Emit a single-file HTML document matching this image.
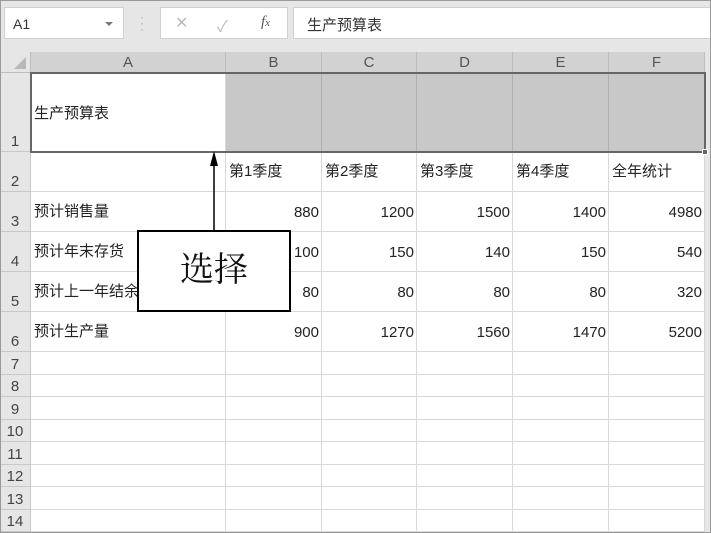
<!DOCTYPE html>
<html><head><meta charset="utf-8"><style>
*{box-sizing:border-box;margin:0;padding:0}
body{width:711px;height:533px;overflow:hidden;background:#e6e6e6;font-family:"Liberation Sans","Noto Sans CJK SC",sans-serif;position:relative}
.frame{position:absolute;left:0;top:0;width:711px;height:533px;border:1px solid #9a9a9a;pointer-events:none;z-index:9}
.nb{position:absolute;left:4px;top:7px;width:120px;height:32px;background:#fff;border:1px solid #d0d0d0;font-size:14px;color:#333;padding:8px 0 0 8px}
.nb .dd{position:absolute;right:10px;top:14px;border-left:4px solid transparent;border-right:4px solid transparent;border-top:4px solid #777}
.dots{position:absolute;left:140px;top:14px;color:#aaa;font-size:12px;line-height:6px}
.fb{position:absolute;left:160px;top:7px;width:128px;height:32px;background:#fff;border:1px solid #d0d0d0;color:#bbb;font-size:16px}
.fx{position:absolute;left:293px;top:7px;width:420px;height:32px;background:#fff;border:1px solid #d0d0d0;font-size:15px;color:#333;padding:6px 0 0 13px}
table{position:absolute;left:0;top:52px;border-collapse:separate;border-spacing:0;table-layout:fixed}
td{border-right:1px solid #d8d8d8;border-bottom:1px solid #d8d8d8;background:#fff;font-size:15px;color:#222;vertical-align:bottom;padding:0 3px 6px 3px;white-space:nowrap;overflow:hidden}
td.h{background:#e6e6e6;color:#444;font-size:15px;text-align:center;padding:0 0 1px 0;border-right:1px solid #c8c8c8;border-bottom:1px solid #c8c8c8}
tr.ch td{background:#d2d2d2;color:#555;font-size:15px;text-align:center;vertical-align:bottom;padding:0 0 1px;border-right:1px solid #bdbdbd;border-bottom:1px solid #bdbdbd}
tr.ch td.c0{background:#e6e6e6}
td.n{text-align:right;padding-right:2px}
td.g{background:#c8c8c8;border-right:1px solid #b0b0b0}
td.r{font-size:15px}
</style></head><body>
<div class="nb">A1<div class="dd"></div></div>
<div class="dots">·<br>·<br>·</div>
<div class="fb"><span style="position:absolute;left:14px;top:5px">✕</span><span style="position:absolute;left:56px;top:5px">✓</span><span style="position:absolute;left:100px;top:6px;color:#555;font-family:'Liberation Serif',serif;font-style:italic;font-size:15px">f<span style="font-size:11px">x</span></span></div>
<div class="fx">生产预算表</div>
<div style="position:absolute;left:14px;top:57px;width:0;height:0;border-left:12px solid transparent;border-bottom:12px solid #b8b8b8;z-index:3"></div>
<table>
<colgroup><col style="width:31px"><col style="width:195px"><col style="width:96px"><col style="width:95px"><col style="width:96px"><col style="width:96px"><col style="width:96px"></colgroup>
<tr class="ch" style="height:21px"><td class="c0"></td><td>A</td><td>B</td><td>C</td><td>D</td><td>E</td><td>F</td></tr>
<tr style="height:79px"><td class="h">1</td><td style="vertical-align:middle;padding-bottom:0">生产预算表</td><td class="g"></td><td class="g"></td><td class="g"></td><td class="g"></td><td class="g"></td></tr>
<tr style="height:40px"><td class="h">2</td><td></td><td style="padding-bottom:10px">第1季度</td><td style="padding-bottom:10px">第2季度</td><td style="padding-bottom:10px">第3季度</td><td style="padding-bottom:10px">第4季度</td><td style="padding-bottom:10px">全年统计</td></tr>
<tr style="height:40px"><td class="h">3</td><td style="padding-bottom:10px">预计销售量</td><td class="n" style="padding-bottom:10px">880</td><td class="n" style="padding-bottom:10px">1200</td><td class="n" style="padding-bottom:10px">1500</td><td class="n" style="padding-bottom:10px">1400</td><td class="n" style="padding-bottom:10px">4980</td></tr>
<tr style="height:40px"><td class="h">4</td><td style="padding-bottom:10px">预计年末存货</td><td class="n" style="padding-bottom:10px">100</td><td class="n" style="padding-bottom:10px">150</td><td class="n" style="padding-bottom:10px">140</td><td class="n" style="padding-bottom:10px">150</td><td class="n" style="padding-bottom:10px">540</td></tr>
<tr style="height:40px"><td class="h">5</td><td style="padding-bottom:10px">预计上一年结余</td><td class="n" style="padding-bottom:10px">80</td><td class="n" style="padding-bottom:10px">80</td><td class="n" style="padding-bottom:10px">80</td><td class="n" style="padding-bottom:10px">80</td><td class="n" style="padding-bottom:10px">320</td></tr>
<tr style="height:40px"><td class="h">6</td><td style="padding-bottom:10px">预计生产量</td><td class="n" style="padding-bottom:10px">900</td><td class="n" style="padding-bottom:10px">1270</td><td class="n" style="padding-bottom:10px">1560</td><td class="n" style="padding-bottom:10px">1470</td><td class="n" style="padding-bottom:10px">5200</td></tr>
<tr style="height:23px"><td class="h">7</td><td></td><td></td><td></td><td></td><td></td><td></td></tr>
<tr style="height:22px"><td class="h">8</td><td></td><td></td><td></td><td></td><td></td><td></td></tr>
<tr style="height:23px"><td class="h">9</td><td></td><td></td><td></td><td></td><td></td><td></td></tr>
<tr style="height:22px"><td class="h">10</td><td></td><td></td><td></td><td></td><td></td><td></td></tr>
<tr style="height:23px"><td class="h">11</td><td></td><td></td><td></td><td></td><td></td><td></td></tr>
<tr style="height:22px"><td class="h">12</td><td></td><td></td><td></td><td></td><td></td><td></td></tr>
<tr style="height:23px"><td class="h">13</td><td></td><td></td><td></td><td></td><td></td><td></td></tr>
<tr style="height:22px"><td class="h">14</td><td></td><td></td><td></td><td></td><td></td><td></td></tr>
</table>
<div style="position:absolute;left:30px;top:72px;width:676px;height:81px;border:2px solid #666;z-index:4"></div>
<div style="position:absolute;left:702px;top:149px;width:6px;height:6px;background:#666;border:1px solid #fff;z-index:5"></div>
<svg style="position:absolute;left:0;top:0;z-index:6" width="711" height="533"><line x1="214" y1="160" x2="214" y2="231" stroke="#000" stroke-width="1.5"/><polygon points="214,151 210,166 218,166" fill="#000"/></svg>
<div style="position:absolute;left:137px;top:230px;width:154px;height:82px;background:#fff;border:2px solid #000;z-index:7;font-family:'Liberation Serif','Noto Serif CJK SC',serif;font-size:34px;text-align:center;line-height:78px;color:#111">选择</div>
<div class="frame"></div>
</body></html>
